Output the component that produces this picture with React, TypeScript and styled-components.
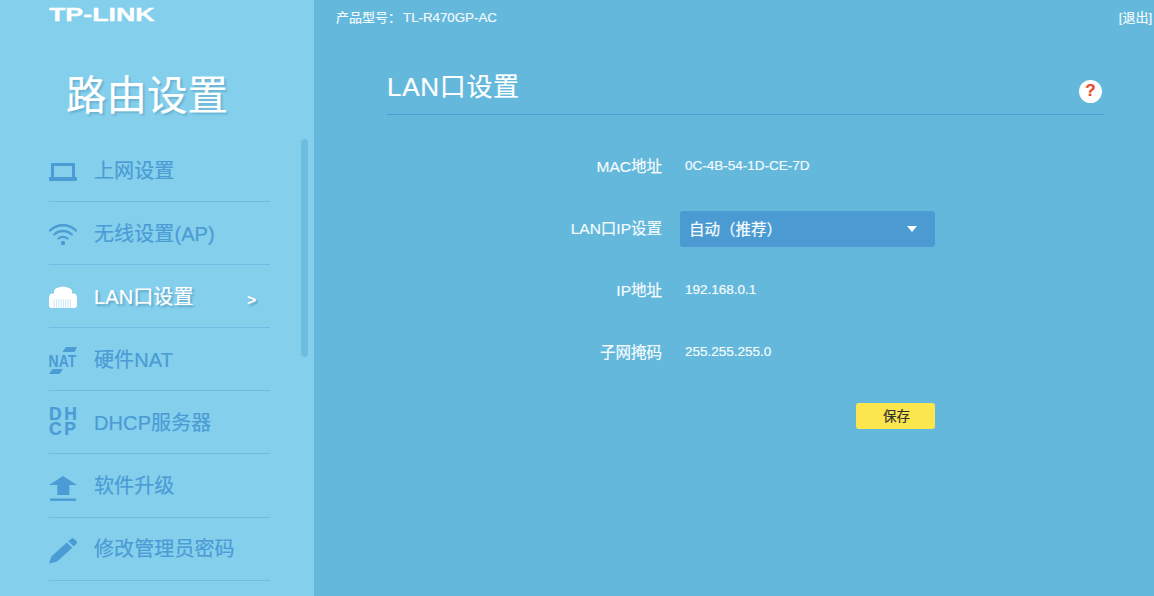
import React from "react";
import styled, { createGlobalStyle } from "styled-components";

const FONT = `"Liberation Sans", "Noto Sans CJK SC", sans-serif`;
const ACCENT = "#4b9bd5";

const Global = createGlobalStyle`
  html, body { margin: 0; padding: 0; height: 100%; overflow: hidden; }
  body { font-family: ${FONT}; -webkit-text-stroke: 0.2px; }
  * { box-sizing: border-box; }
`;

const Page = styled.div`
  display: flex;
  width: 1154px;
  height: 596px;
  overflow: hidden;
  background: #63b8db;
`;

const Sidebar = styled.aside`
  position: relative;
  flex: 0 0 314px;
  height: 596px;
  overflow: hidden;
  background: #84cfec;
`;

const LogoRow = styled.div`
  display: flex;
  height: 28px;
  padding: 2px 0 0 49px;
`;

const Brand = styled.h1`
  margin: 0;
  padding: 24px 0 0 66px;
  height: 111px;
  font-size: 40.5px;
  line-height: 88px;
  font-weight: 400;
  color: #fff;
  text-shadow: 2px 2px 2px rgba(40, 110, 150, 0.3);
`;

const Menu = styled.nav`
  display: flex;
  flex-direction: column;
  padding: 0 44px 0 49px;
`;

const MenuRow = styled.div<{ $active?: boolean }>`
  display: flex;
  align-items: center;
  gap: 17px;
  height: 63.1px;
  padding-right: 14px;
  border-bottom: 1px solid #6cbde2;
  font-size: 20px;
  color: ${(p) => (p.$active ? "#fff" : ACCENT)};
  text-shadow: ${(p) => (p.$active ? "2px 2px 2px rgba(40, 110, 150, 0.45)" : "none")};
`;

const MenuLabel = styled.span`
  margin-top: -1.4px;
  letter-spacing: 0.1px;
`;

const MenuIcon = styled.svg`
  flex: 0 0 28px;
  width: 28px;
  height: 30px;
  display: block;
  overflow: visible;
`;

const DhcpMark = styled.span`
  flex: 0 0 28px;
  width: 28px;
  font-size: 17.5px;
  line-height: 15px;
  font-weight: 700;
  letter-spacing: 2.5px;
  white-space: pre-line;
`;

const Chevron = styled.span`
  margin-left: auto;
  margin-top: 7px;
  font-size: 15px;
  font-weight: 700;
`;

const ScrollThumb = styled.div`
  position: absolute;
  left: 301px;
  top: 139px;
  width: 7px;
  height: 218px;
  border-radius: 4px;
  background: #6cbde0;
`;

const Main = styled.main`
  flex: 1;
  display: flex;
  flex-direction: column;
  color: #fff;
`;

const TopBar = styled.header`
  display: flex;
  align-items: center;
  justify-content: space-between;
  height: 34px;
  padding: 0 2px 2px 22px;
`;

const Model = styled.span`
  font-size: 13px;
  color: #f2fafd;
`;

const ModelCode = styled.span`
  font-size: 13.3px;
  margin-left: 2px;
`;

const Logout = styled.span`
  font-size: 13px;
  color: #f2fafd;
`;

const Content = styled.div`
  display: flex;
  flex-direction: column;
  padding: 0 50px 0 73px;
`;

const Heading = styled.div`
  display: flex;
  justify-content: space-between;
  height: 81px;
  padding: 36px 2px 0 0;
  border-bottom: 1px solid ${ACCENT};
`;

const Title = styled.h2`
  margin: 0;
  font-size: 26px;
  line-height: 34px;
  font-weight: 400;
  letter-spacing: 0.7px;
`;

const Help = styled.span`
  display: flex;
  align-items: center;
  justify-content: center;
  width: 23px;
  height: 23px;
  margin-top: 9.5px;
  border-radius: 50%;
  background: #fff;
  color: #ea4a2a;
  font-size: 17px;
  font-weight: 700;
`;

const Form = styled.div`
  display: grid;
  grid-template-columns: 275px 255px;
  grid-auto-rows: 62px;
  column-gap: 18px;
  align-items: center;
  margin-top: 19px;
`;

const Label = styled.div`
  text-align: right;
  font-size: 15.5px;
  color: #f4fbfe;
`;

const Value = styled.div`
  padding-left: 5px;
  font-size: 13.5px;
  color: #f4fbfe;
`;

const Select = styled.div`
  display: flex;
  align-items: center;
  justify-content: space-between;
  height: 36px;
  margin-top: 4px;
  padding: 0 18px 2px 9px;
  border-radius: 3px;
  background: #4b9bd2;
  font-size: 15.5px;
  color: #f7fcfe;
`;

const Caret = styled.span`
  width: 0;
  height: 0;
  margin-top: 2px;
  border-left: 5px solid transparent;
  border-right: 5px solid transparent;
  border-top: 6px solid #fff;
`;

const SaveButton = styled.button`
  grid-column: 2;
  justify-self: end;
  width: 79px;
  height: 26px;
  margin-top: 6px;
  padding: 0 0 2px 2px;
  border: none;
  border-radius: 3px;
  background: #fbe64f;
  color: #333;
  font-family: ${FONT};
  font-size: 13.5px;
`;

const icons: Record<string, React.ReactNode> = {
  net: (
    <MenuIcon viewBox="0 0 28 30">
      <rect x="3.5" y="9.5" width="21" height="14" fill="none" stroke={ACCENT} strokeWidth="3" />
      <path fill={ACCENT} d="M0 22H28V24.5C28 25.5 27.3 26 26.5 26H1.5C.7 26 0 25.5 0 24.5Z" />
    </MenuIcon>
  ),
  wifi: (
    <MenuIcon viewBox="0 0 28 30">
      <g fill="none" stroke={ACCENT} strokeWidth="2.3" strokeLinecap="round">
        <path d="M1 12.5C8 5.5 20 5.5 27 12.5" />
        <path d="M5.3 16.5C10 11.8 18 11.8 22.7 16.5" />
        <path d="M9.5 20.5C12 18.2 16 18.2 18.5 20.5" />
      </g>
      <circle cx="14" cy="25" r="2.2" fill={ACCENT} />
    </MenuIcon>
  ),
  lan: (
    <MenuIcon viewBox="0 0 28 30">
      <path
        fill="#fff"
        d="M0 24.5V17C0 14.5 1 13 2.5 12.5H5V9.5C6 8 7.5 7 9 6.8C10 5.3 18 5.3 19 6.8C20.5 7 22 8 23 9.5V12.5H25.5C27 13 28 14.5 28 17V24.5C28 26 27 27 25.5 27H2.5C1 27 0 26 0 24.5Z"
      />
      <path
        stroke="#c4e8f6"
        strokeWidth="0.9"
        d="M5.2 18V27M7.5 18V27M9.8 18V27M12.1 18V27M14.4 18V27M16.7 18V27M19 18V27M21.3 18V27"
      />
    </MenuIcon>
  ),
  nat: (
    <MenuIcon viewBox="0 0 28 30">
      <path fill={ACCENT} d="M17 3H28L25.5 8H13.5Z" />
      <text
        transform="scale(1 1.22)"
        x="-0.4"
        y="18.6"
        fontFamily={FONT}
        fontSize="14"
        fontWeight="700"
        fill={ACCENT}
      >
        NAT
      </text>
      <path fill={ACCENT} d="M3.5 25H14L10.5 30H0Z" />
    </MenuIcon>
  ),
  dhcp: <DhcpMark>{"DH\nCP"}</DhcpMark>,
  upgrade: (
    <MenuIcon viewBox="0 0 28 30">
      <path fill={ACCENT} d="M14 5L28 14H20.3V24H8.3V14H0Z" />
      <rect x="1" y="27.5" width="26" height="2.4" fill={ACCENT} />
    </MenuIcon>
  ),
  password: (
    <MenuIcon viewBox="0 0 28 30">
      <path fill={ACCENT} d="M0 29.5L2.6 22.3L17.8 8.6L23.4 13.8L8 27.4Z" />
      <path fill={ACCENT} d="M19.3 7.2L22.6 4.6C23.2 4.1 24 4.1 24.6 4.6L27.7 7.5C28.2 8.1 28.2 8.9 27.6 9.4L24.9 12.4Z" />
    </MenuIcon>
  ),
};

const menu = [
  { key: "net", label: "上网设置" },
  { key: "wifi", label: "无线设置(AP)" },
  { key: "lan", label: "LAN口设置", active: true },
  { key: "nat", label: "硬件NAT" },
  { key: "dhcp", label: "DHCP服务器" },
  { key: "upgrade", label: "软件升级" },
  { key: "password", label: "修改管理员密码" },
];

export default function App() {
  return (
    <Page>
      <Global />
      <Sidebar>
        <LogoRow>
          <svg width="107" height="24" viewBox="0 0 107 24">
            <text
              transform="scale(1.49 1)"
              x="0"
              y="19"
              fontFamily={FONT}
              fontSize="18"
              fontWeight="700"
              fill="#fff"
              stroke="#fff"
              strokeWidth="0.3"
            >
              TP-LINK
            </text>
          </svg>
        </LogoRow>
        <Brand>路由设置</Brand>
        <Menu>
          {menu.map((m) => (
            <MenuRow key={m.key} $active={m.active}>
              {icons[m.key]}
              <MenuLabel>{m.label}</MenuLabel>
              {m.active && <Chevron>&gt;</Chevron>}
            </MenuRow>
          ))}
        </Menu>
        <ScrollThumb />
      </Sidebar>
      <Main>
        <TopBar>
          <Model>
            产品型号：<ModelCode>TL-R470GP-AC</ModelCode>
          </Model>
          <Logout>[退出]</Logout>
        </TopBar>
        <Content>
          <Heading>
            <Title>LAN口设置</Title>
            <Help>?</Help>
          </Heading>
          <Form>
            <Label>MAC地址</Label>
            <Value>0C-4B-54-1D-CE-7D</Value>
            <Label>LAN口IP设置</Label>
            <Select>
              <span>自动（推荐）</span>
              <Caret />
            </Select>
            <Label>IP地址</Label>
            <Value>192.168.0.1</Value>
            <Label>子网掩码</Label>
            <Value>255.255.255.0</Value>
            <SaveButton>保存</SaveButton>
          </Form>
        </Content>
      </Main>
    </Page>
  );
}
